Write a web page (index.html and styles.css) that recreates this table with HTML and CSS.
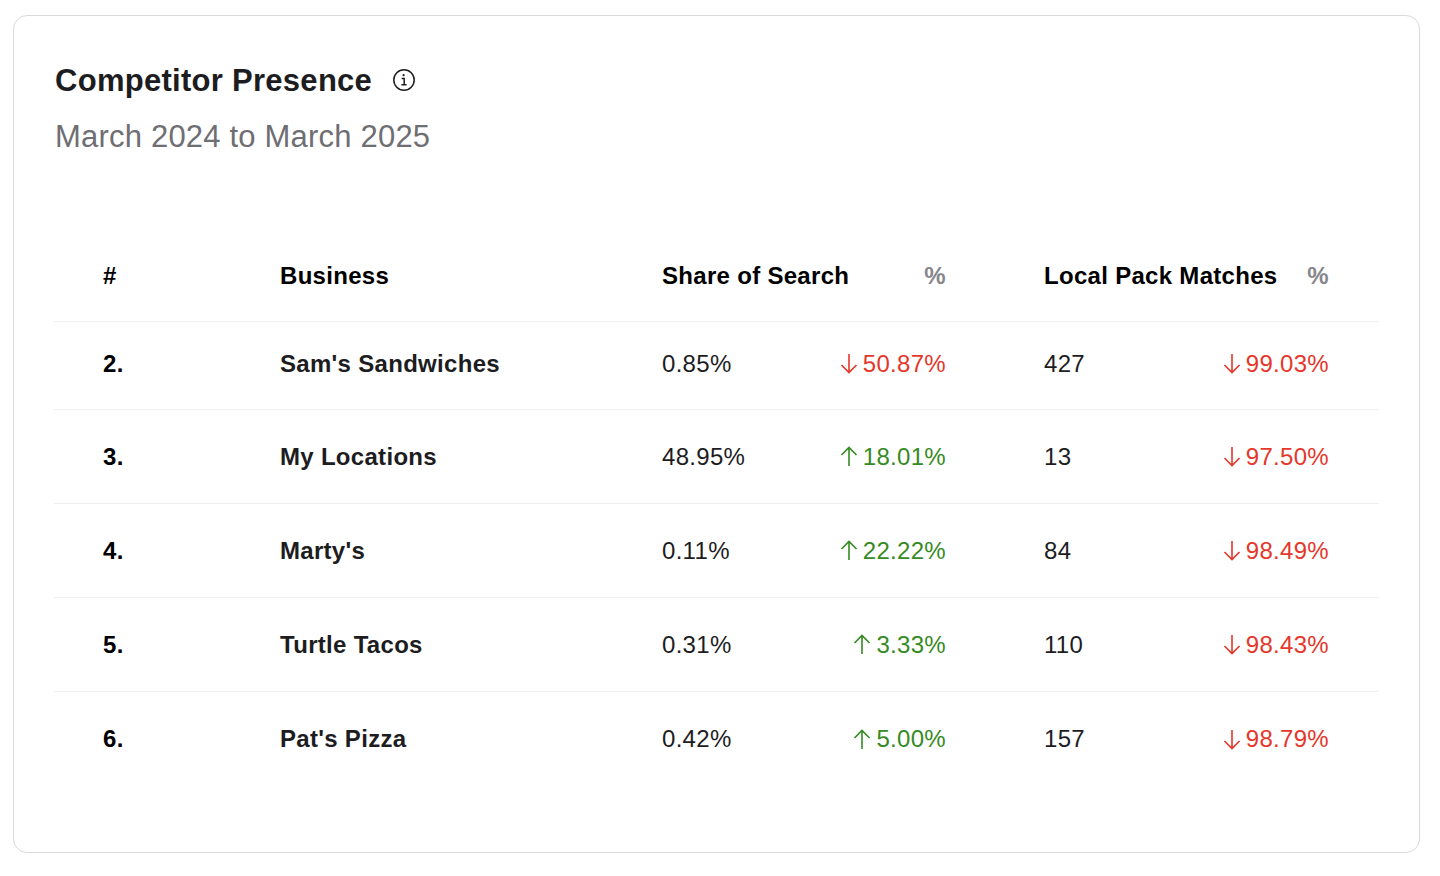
FILE: index.html
```html
<!DOCTYPE html>
<html lang="en">
<head>
<meta charset="utf-8">
<title>Competitor Presence</title>
<link rel="stylesheet" href="styles.css">
</head>
<body>
<div class="card">
  <div class="title-row">
    <h1 class="title">Competitor Presence</h1>
    <svg class="info" width="24" height="24" viewBox="0 0 24 24" fill="none" stroke="#1d1d1f">
      <circle cx="12" cy="12" r="10.2" stroke-width="1.5"/>
      <circle cx="11.6" cy="7.2" r="1.1" fill="#1d1d1f" stroke="none"/>
      <path d="M9.6 10.4H12.2V16.6M9.4 16.8H14.6" stroke-width="1.5"/>
    </svg>
  </div>
  <div class="subtitle">March 2024 to March 2025</div>

  <div class="table">
    <div class="row head">
      <div>#</div>
      <div>Business</div>
      <div class="pair"><span>Share of Search</span><span class="pct">%</span></div>
      <div class="pair last"><span>Local Pack Matches</span><span class="pct">%</span></div>
    </div>

    <div class="row first">
      <div class="num">2.</div>
      <div class="name">Sam's Sandwiches</div>
      <div class="pair"><span>0.85%</span><span class="delta down"><svg class="arrow" viewBox="0 0 18 21"><path d="M9 1V19.5M1.5 12L9 19.5L16.5 12"/></svg>50.87%</span></div>
      <div class="pair last"><span>427</span><span class="delta down"><svg class="arrow" viewBox="0 0 18 21"><path d="M9 1V19.5M1.5 12L9 19.5L16.5 12"/></svg>99.03%</span></div>
    </div>

    <div class="row">
      <div class="num">3.</div>
      <div class="name">My Locations</div>
      <div class="pair"><span>48.95%</span><span class="delta up"><svg class="arrow" viewBox="0 0 18 21"><path d="M9 20V1.5M1.5 9L9 1.5L16.5 9"/></svg>18.01%</span></div>
      <div class="pair last"><span>13</span><span class="delta down"><svg class="arrow" viewBox="0 0 18 21"><path d="M9 1V19.5M1.5 12L9 19.5L16.5 12"/></svg>97.50%</span></div>
    </div>

    <div class="row">
      <div class="num">4.</div>
      <div class="name">Marty's</div>
      <div class="pair"><span>0.11%</span><span class="delta up"><svg class="arrow" viewBox="0 0 18 21"><path d="M9 20V1.5M1.5 9L9 1.5L16.5 9"/></svg>22.22%</span></div>
      <div class="pair last"><span>84</span><span class="delta down"><svg class="arrow" viewBox="0 0 18 21"><path d="M9 1V19.5M1.5 12L9 19.5L16.5 12"/></svg>98.49%</span></div>
    </div>

    <div class="row">
      <div class="num">5.</div>
      <div class="name">Turtle Tacos</div>
      <div class="pair"><span>0.31%</span><span class="delta up"><svg class="arrow" viewBox="0 0 18 21"><path d="M9 20V1.5M1.5 9L9 1.5L16.5 9"/></svg>3.33%</span></div>
      <div class="pair last"><span>110</span><span class="delta down"><svg class="arrow" viewBox="0 0 18 21"><path d="M9 1V19.5M1.5 12L9 19.5L16.5 12"/></svg>98.43%</span></div>
    </div>

    <div class="row">
      <div class="num">6.</div>
      <div class="name">Pat's Pizza</div>
      <div class="pair"><span>0.42%</span><span class="delta up"><svg class="arrow" viewBox="0 0 18 21"><path d="M9 20V1.5M1.5 9L9 1.5L16.5 9"/></svg>5.00%</span></div>
      <div class="pair last"><span>157</span><span class="delta down"><svg class="arrow" viewBox="0 0 18 21"><path d="M9 1V19.5M1.5 12L9 19.5L16.5 12"/></svg>98.79%</span></div>
    </div>
  </div>
</div>
</body>
</html>
```
FILE: styles.css
```css
* { box-sizing: border-box; }

html, body {
  margin: 0;
  padding: 0;
  background: #ffffff;
}

body {
  font-family: "Liberation Sans", Arial, Helvetica, sans-serif;
  color: #1d1d1f;
  padding: 15px 20px 0 13px;
}

.card {
  height: 838px;
  border: 1.5px solid #d9d9de;
  border-radius: 14px;
  padding: 46px 40px 0 40px;
  background: #fff;
}

.title-row {
  display: flex;
  align-items: center;
  gap: 20px;
  height: 38px;
  padding-left: 1px;
}

.title {
  margin: 0;
  font-size: 31px;
  font-weight: 700;
  line-height: 38px;
  color: #1d1d1f;
  letter-spacing: 0.28px;
}

.info {
  display: block;
  width: 24px;
  height: 24px;
  margin-top: -2px;
}

.subtitle {
  margin-top: 18px;
  padding-left: 1px;
  font-size: 31px;
  line-height: 38px;
  color: #6e6e73;
  letter-spacing: 0.2px;
}

.table {
  margin-top: 74px;
}

.row {
  display: grid;
  grid-template-columns: 177px 382px 284px 1fr;
  align-items: center;
  height: 94px;
  padding: 0 50px 0 49px;
  border-bottom: 1px solid #efeff4;
  font-size: 24px;
  letter-spacing: 0.3px;
}

.row:last-child {
  border-bottom: none;
}

.row.head {
  height: 92px;
  font-weight: 700;
  color: #000;
}

.row.first {
  height: 88px;
  padding-bottom: 4px;
}

.num {
  font-weight: 700;
  color: #000;
}

.name {
  font-weight: 700;
  color: #1d1d1f;
}

.pair {
  display: flex;
  justify-content: space-between;
  align-items: center;
}

.pair.last {
  padding-left: 98px;
}

.pct {
  color: #86868b;
  font-weight: 700;
}

.delta {
  display: inline-flex;
  align-items: center;
  gap: 5px;
}

.delta.down { color: #e5372b; }
.delta.up { color: #368a24; }

.arrow {
  width: 18px;
  height: 21px;
  fill: none;
  stroke: currentColor;
  stroke-width: 1.6;
  stroke-linecap: butt;
  stroke-linejoin: miter;
}
```
